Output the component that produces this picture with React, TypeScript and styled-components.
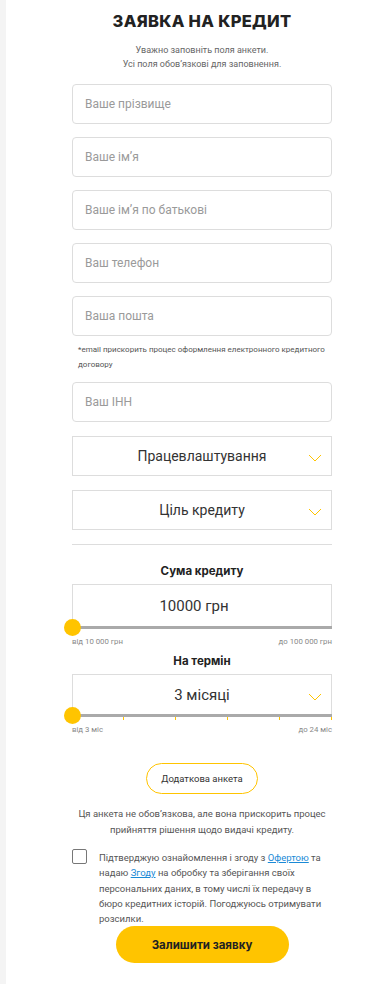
import React from 'react';
import styled, { createGlobalStyle } from 'styled-components';

const GlobalStyle = createGlobalStyle`
  html, body {
    margin: 0;
    padding: 0;
    background: #fff;
  }
  body {
    font-family: Roboto, "Liberation Sans", Arial, sans-serif;
    color: #333;
  }
  * {
    box-sizing: border-box;
  }
`;

const YELLOW = '#ffc400';

const Page = styled.div`
  display: flex;
  min-height: 984px;
`;

const SideStrip = styled.div`
  width: 6px;
  flex-shrink: 0;
  background: #f4f4f4;
`;

const Main = styled.main`
  flex: 1;
  padding: 11px 60px 0 66px;
`;

const Form = styled.form`
  display: flex;
  flex-direction: column;
  width: 260px;
`;

const Title = styled.h1`
  margin: 0;
  font-family: Inter, "Open Sans", sans-serif;
  font-weight: 800;
  font-size: 16.5px;
  line-height: 20px;
  letter-spacing: 0.3px;
  text-align: center;
  color: #222;
`;

const Subtitle = styled.p`
  margin: 12px 0 0;
  font-size: 9px;
  line-height: 14px;
  text-align: center;
  color: #666;
`;

const Fields = styled.div`
  display: flex;
  flex-direction: column;
  gap: 13px;
  margin-top: 13px;
`;

const TextInput = styled.input`
  width: 100%;
  height: 40px;
  border: 1px solid #ddd;
  border-radius: 4px;
  padding: 0 12px;
  font-family: Roboto, sans-serif;
  font-size: 12px;
  color: #333;
  outline: none;
  &::placeholder {
    color: #9a9a9a;
  }
`;

const Note = styled.p`
  margin: 6px 0 0;
  padding-left: 6px;
  font-size: 8px;
  line-height: 15px;
  color: #555;
`;

const InnLabel = styled.div`
  margin-top: 10px;
`;

const Selects = styled.div`
  display: flex;
  flex-direction: column;
  gap: 14px;
  margin-top: 14px;
`;

const SelectBox = styled.div`
  position: relative;
  height: 40px;
  border: 1px solid #ddd;
  display: flex;
  align-items: center;
  justify-content: center;
  font-size: 14px;
  color: #333;
`;

const ChevronWrap = styled.span`
  position: absolute;
  right: 9px;
  top: 50%;
  margin-top: -2px;
  display: flex;
`;

const Divider = styled.hr`
  margin: 14px 0 0;
  border: none;
  border-top: 1px solid #ddd;
`;

const SectionLabel = styled.div<{ $top: number }>`
  margin-top: ${p => p.$top}px;
  font-family: Inter, "Open Sans", sans-serif;
  font-weight: 700;
  font-size: 11.5px;
  line-height: 14px;
  text-align: center;
  color: #222;
`;

const RangeBlock = styled.div`
  margin-top: 6px;
`;

const ValueBox = styled.div<{ $shift?: number; $h: number }>`
  position: relative;
  height: ${p => p.$h}px;
  border: 1px solid #ddd;
  border-bottom: none;
  display: flex;
  align-items: center;
  justify-content: center;
  padding-right: ${p => p.$shift ?? 0}px;
  font-size: 15px;
  color: #333;
`;

const Track = styled.div`
  position: relative;
  height: 3px;
  background: #aaa;
`;

const Thumb = styled.span`
  position: absolute;
  left: -8px;
  top: -7px;
  width: 17px;
  height: 17px;
  border-radius: 50%;
  background: ${YELLOW};
`;

const Tick = styled.span<{ $pos: number }>`
  position: absolute;
  top: 3px;
  left: ${p => p.$pos}%;
  width: 1px;
  height: 3px;
  margin-left: -1px;
  background: ${YELLOW};
`;

const RangeLabels = styled.div`
  display: flex;
  justify-content: space-between;
  margin-top: 8px;
  font-size: 7.8px;
  line-height: 9px;
  color: #888;
`;

const Center = styled.div`
  display: flex;
  justify-content: center;
  margin-top: 29px;
`;

const OutlineButton = styled.button`
  height: 31px;
  padding: 0 14px;
  border: 1px solid ${YELLOW};
  border-radius: 16px;
  background: #fff;
  font-family: Roboto, sans-serif;
  font-size: 9.5px;
  color: #333;
`;

const Hint = styled.p`
  margin: 12px 0 0;
  font-size: 9.5px;
  line-height: 16px;
  text-align: center;
  color: #555;
`;

const ConsentRow = styled.label`
  display: flex;
  gap: 12px;
  margin-top: 11px;
`;

const Checkbox = styled.span`
  flex-shrink: 0;
  width: 15px;
  height: 15px;
  border: 1px solid #777;
  border-radius: 2px;
`;

const ConsentText = styled.div`
  padding-top: 1px;
  font-size: 9.5px;
  line-height: 15.3px;
  color: #555;
  a {
    color: #1a8ad6;
    text-decoration: underline;
  }
`;

const SubmitWrap = styled.div`
  display: flex;
  justify-content: center;
  margin-top: 0;
`;

const SubmitButton = styled.button`
  width: 173px;
  height: 37px;
  border: none;
  border-radius: 19px;
  background: ${YELLOW};
  font-family: Inter, "Open Sans", sans-serif;
  font-weight: 700;
  font-size: 11.5px;
  color: #222;
`;

const Chevron = () => (
  <svg width="14" height="8" viewBox="0 0 14 8" fill="none">
    <path d="M1 1l6 6 6-6" stroke={YELLOW} strokeWidth="1" />
  </svg>
);

const inputs = [
  'Ваше прізвище',
  'Ваше імʼя',
  'Ваше імʼя по батькові',
  'Ваш телефон',
  'Ваша пошта',
];

const App: React.FC = () => {
  return (
    <Page>
      <GlobalStyle />
      <SideStrip />
      <Main>
        <Form onSubmit={e => e.preventDefault()}>
          <Title>ЗАЯВКА НА КРЕДИТ</Title>
          <Subtitle>
            Уважно заповніть поля анкети.
            <br />
            Усі поля обовʼязкові для заповнення.
          </Subtitle>

          <Fields>
            {inputs.map(p => (
              <TextInput key={p} placeholder={p} />
            ))}
          </Fields>
          <Note>*email прискорить процес оформлення електронного кредитного договору</Note>
          <InnLabel>
            <TextInput placeholder="Ваш ІНН" />
          </InnLabel>

          <Selects>
            <SelectBox>
              Працевлаштування
              <ChevronWrap><Chevron /></ChevronWrap>
            </SelectBox>
            <SelectBox>
              Ціль кредиту
              <ChevronWrap><Chevron /></ChevronWrap>
            </SelectBox>
          </Selects>

          <Divider />

          <SectionLabel $top={19}>Сума кредиту</SectionLabel>
          <RangeBlock>
            <ValueBox $h={42} $shift={16}>10000 грн</ValueBox>
            <Track>
              <Thumb />
            </Track>
            <RangeLabels>
              <span>від 10 000 грн</span>
              <span>до 100 000 грн</span>
            </RangeLabels>
          </RangeBlock>

          <SectionLabel $top={8}>На термін</SectionLabel>
          <RangeBlock>
            <ValueBox $h={40}>
              3 місяці
              <ChevronWrap><Chevron /></ChevronWrap>
            </ValueBox>
            <Track>
              {[20, 40, 60, 80, 100].map(t => (
                <Tick key={t} $pos={t} />
              ))}
              <Thumb />
            </Track>
            <RangeLabels>
              <span>від 3 міс</span>
              <span>до 24 міс</span>
            </RangeLabels>
          </RangeBlock>

          <Center>
            <OutlineButton type="button">Додаткова анкета</OutlineButton>
          </Center>
          <Hint>
            Ця анкета не обовʼязкова, але вона прискорить процес
            <br />
            прийняття рішення щодо видачі кредиту.
          </Hint>

          <ConsentRow>
            <Checkbox />
            <ConsentText>
              Підтверджую ознайомлення і згоду з <a href="#">Офертою</a> та надаю{' '}
              <a href="#">Згоду</a> на обробку та зберігання своїх персональних даних, в тому
              числі їх передачу в бюро кредитних історій. Погоджуюсь отримувати розсилки.
            </ConsentText>
          </ConsentRow>

          <SubmitWrap>
            <SubmitButton type="submit">Залишити заявку</SubmitButton>
          </SubmitWrap>
        </Form>
      </Main>
    </Page>
  );
};

export default App;
